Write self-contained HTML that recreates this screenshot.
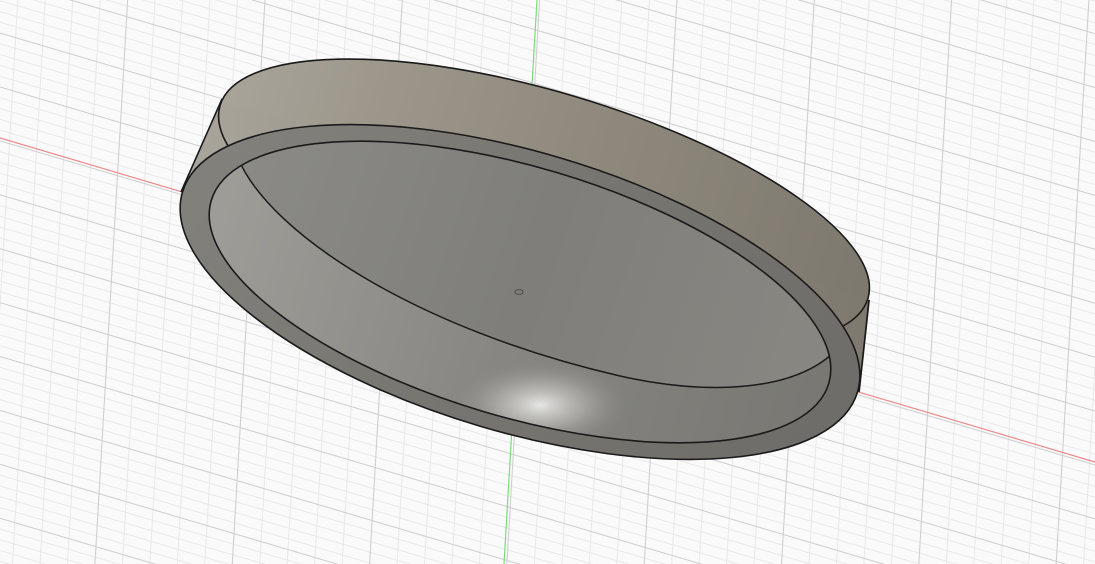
<!DOCTYPE html>
<html><head><meta charset="utf-8"><style>html,body{margin:0;padding:0;background:#fafafa;overflow:hidden}svg{display:block}</style></head>
<body>
<svg width="1095" height="564" viewBox="0 0 1095 564" xmlns="http://www.w3.org/2000/svg">
<defs>
<pattern id="minor" width="27" height="10.6" x="125" y="32" patternUnits="userSpaceOnUse" patternTransform="matrix(1,0.296,-0.058,1,0,0)">
<path d="M0.5 0V10.6M0 0.5H27" stroke="#e8e8e8" stroke-width="1" fill="none"/>
</pattern>
<pattern id="major" width="135" height="53" x="125" y="32" patternUnits="userSpaceOnUse" patternTransform="matrix(1,0.296,-0.058,1,0,0)">
<path d="M0.5 0V53M0 0.5H135" stroke="#cfcfcf" stroke-width="1" fill="none"/>
</pattern>
<linearGradient id="side" x1="180" y1="0" x2="870" y2="0" gradientUnits="userSpaceOnUse">
<stop offset="0" stop-color="#aaa69d"/>
<stop offset="0.25" stop-color="#9d978b"/>
<stop offset="0.6" stop-color="#8e887c"/>
<stop offset="1" stop-color="#7e796f"/>
</linearGradient>
<linearGradient id="face" x1="180" y1="200" x2="860" y2="420" gradientUnits="userSpaceOnUse">
<stop offset="0" stop-color="#83817c"/>
<stop offset="0.5" stop-color="#777570"/>
<stop offset="1" stop-color="#6e6c68"/>
</linearGradient>
<radialGradient id="hl" cx="540" cy="405" r="110" gradientUnits="userSpaceOnUse" gradientTransform="translate(540 405) scale(0.8 0.4) translate(-540 -405)">
<stop offset="0" stop-color="#e6e6e4"/>
<stop offset="0.5" stop-color="#b3b2ae" stop-opacity="0.7"/>
<stop offset="1" stop-color="#8d8c88" stop-opacity="0"/>
</radialGradient>
<linearGradient id="wall" x1="210" y1="0" x2="830" y2="0" gradientUnits="userSpaceOnUse">
<stop offset="0" stop-color="#9e9c97"/>
<stop offset="0.5" stop-color="#878682"/>
<stop offset="1" stop-color="#797873"/>
</linearGradient>
<linearGradient id="floor" x1="240" y1="160" x2="830" y2="360" gradientUnits="userSpaceOnUse">
<stop offset="0" stop-color="#8b8a86"/>
<stop offset="0.5" stop-color="#7f7e7a"/>
<stop offset="1" stop-color="#898782"/>
</linearGradient>
<clipPath id="innerclip"><ellipse cx="520" cy="292" rx="322" ry="125" transform="rotate(16.5 520 292)"/></clipPath>
</defs>
<rect width="1095" height="564" fill="#fafafa"/>
<rect width="1095" height="564" fill="url(#minor)"/>
<rect width="1095" height="564" fill="url(#major)"/>
<line x1="0" y1="138" x2="1095" y2="462" stroke="#ee8a8a" stroke-width="1.2"/>
<line x1="537" y1="0" x2="504" y2="564" stroke="#7fd97f" stroke-width="1.2"/>

<ellipse cx="544" cy="202" rx="338" ry="110" transform="rotate(16.6 544 202)" fill="url(#side)"/>
<polygon points="221,101 870,300 860,392 181,193" fill="url(#side)"/>
<ellipse cx="544" cy="202" rx="338" ry="110" transform="rotate(16.6 544 202)" fill="none" stroke="#1a1a1a" stroke-width="1.6"/>
<line x1="222" y1="99" x2="181" y2="192" stroke="#1a1a1a" stroke-width="1.6"/>
<line x1="869" y1="300" x2="859" y2="392" stroke="#1a1a1a" stroke-width="1.6"/>

<ellipse cx="520" cy="292" rx="352" ry="140" transform="rotate(16.5 520 292)" fill="url(#face)" stroke="#1a1a1a" stroke-width="1.6"/>
<ellipse cx="520" cy="292" rx="322" ry="125" transform="rotate(16.5 520 292)" fill="url(#wall)"/>
<g clip-path="url(#innerclip)">
<ellipse cx="540" cy="405" rx="140" ry="60" fill="url(#hl)"/>
<path d="M238,158 C270,235 420,330 620,376 C705,395 790,392 832,354 L900,100 L200,100 Z" fill="url(#floor)"/>
<path d="M238,158 C270,235 420,330 620,376 C705,395 790,392 832,354" fill="none" stroke="#1a1a1a" stroke-width="1.5"/>
</g>
<ellipse cx="520" cy="292" rx="322" ry="125" transform="rotate(16.5 520 292)" fill="none" stroke="#1a1a1a" stroke-width="1.6"/>
<ellipse cx="519" cy="292" rx="4" ry="2.5" fill="none" stroke="#555" stroke-width="1.2"/>
</svg>
</body></html>
